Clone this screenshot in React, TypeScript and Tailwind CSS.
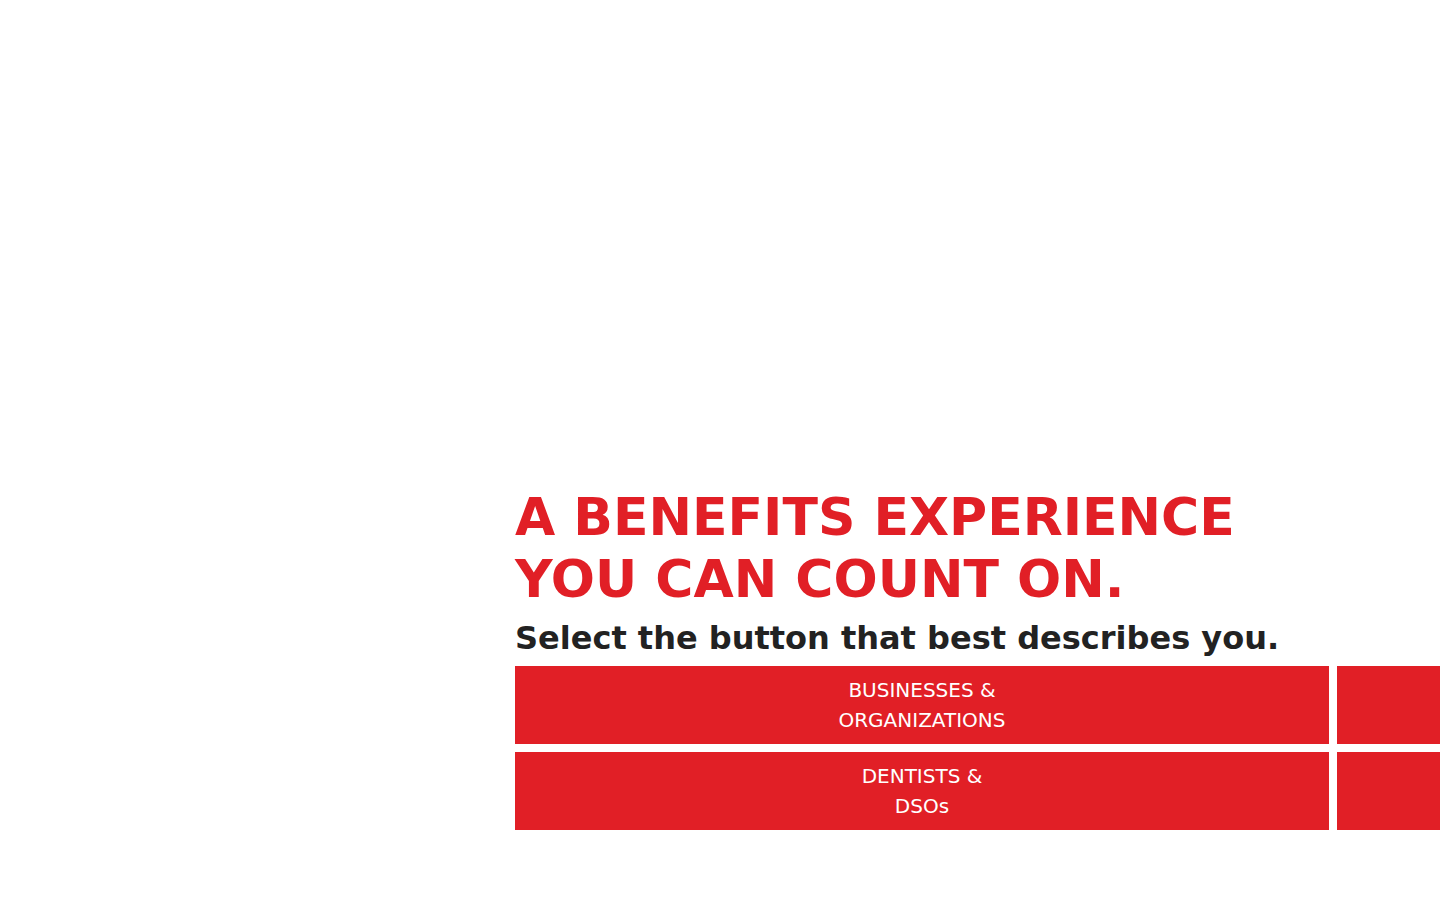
import React from "react";

const buttons = [
  ["BUSINESSES &", "ORGANIZATIONS"],
  ["", ""],
  ["DENTISTS &", "DSOs"],
  ["", ""],
];

export default function App() {
  return (
    <div
      className="w-full h-[900px] overflow-hidden bg-white"
      style={{ fontFamily: '"DejaVu Sans", "Liberation Sans", sans-serif' }}
    >
      <div className="pt-[486px] pl-[515px]">
        <h1 className="text-[52px] leading-[62px] font-bold text-[#e11f26] whitespace-nowrap m-0">
          A BENEFITS EXPERIENCE
          <br />
          YOU CAN COUNT ON.
        </h1>
        <p className="mt-[9px] text-[32px] leading-[38px] font-bold text-[#222222] whitespace-nowrap">
          Select the button that best describes you.
        </p>
        <div className="mt-[9px] grid grid-cols-[814px_814px] gap-[8px] w-[1636px]">
          {buttons.map((b, i) => (
            <button
              key={i}
              className="h-[78px] bg-[#e11f26] text-white text-[20px] leading-[30px] flex flex-col items-center justify-center"
            >
              <span>{b[0]}</span>
              <span>{b[1]}</span>
            </button>
          ))}
        </div>
      </div>
    </div>
  );
}
